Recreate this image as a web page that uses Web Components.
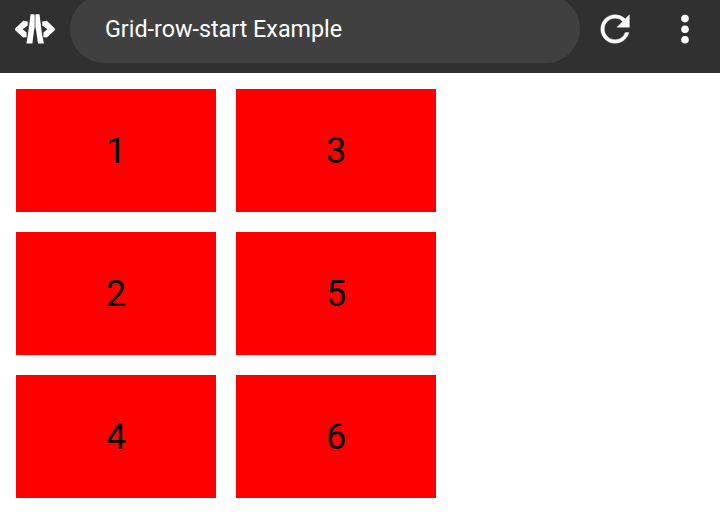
<!DOCTYPE html>
<html lang="en">
<head>
<meta charset="utf-8">
<title>Grid-row-start Example</title>
<style>
body { margin: 0; background: #fff; font-family: Roboto, sans-serif; }
</style>
</head>
<body>
<browser-bar>Grid-row-start Example</browser-bar>
<number-grid>
  <grid-cell>1</grid-cell>
  <grid-cell>2</grid-cell>
  <grid-cell>4</grid-cell>
  <grid-cell>3</grid-cell>
  <grid-cell>5</grid-cell>
  <grid-cell>6</grid-cell>
</number-grid>
<script>
function define(name, html) {
  customElements.define(name, class extends HTMLElement {
    constructor() {
      super();
      this.attachShadow({ mode: "open" }).innerHTML = html;
    }
  });
}

define("browser-bar", `
<style>
:host { display: grid; grid-template-columns: 70px 510px 70px 70px; height: 73px; background: #303030; overflow: hidden; color: #fff; }
svg { display: block; width: 70px; height: 58px; fill: #fff; }
.address { height: 68px; margin-top: -5px; border-radius: 34px; background: #404040; box-sizing: border-box; padding-left: 35px; font-size: 23.3px; line-height: 68px; white-space: nowrap; }
</style>
<svg viewBox="0 0 70 58">
  <path d="M23.2 20.8L27.8 21.6V25.4L22.6 29.3L26.6 32.6V37.2L23.2 37.6L15.4 30.4Q14.6 29.3 15.4 28.2ZM46.8 20.8L42.2 21.6V25.4L47.4 29.3L43.4 32.6V37.2L46.8 37.6L54.6 30.4Q55.4 29.3 54.6 28.2Z"/>
  <path fill="#858585" d="M34 15H36V26L35.3 30H34.5L33.8 26Z"/>
  <path d="M30.6 14.3H34.4V27L32.4 43.6H26.4L28 34ZM35.6 14.3H39.5L42 34L43.9 43.6H38L35.6 27Z"/>
</svg>
<div class="address"><slot></slot></div>
<svg viewBox="0 0 70 58"><path stroke="#fff" stroke-width=".2" transform="translate(13.6 7.5) scale(1.79)" d="M17.65 6.35A7.95 7.95 0 0 0 12 4c-4.42 0-7.99 3.58-7.99 8s3.57 8 7.99 8c3.73 0 6.84-2.55 7.73-6h-2.08A5.99 5.99 0 0 1 12 18c-3.31 0-6-2.69-6-6s2.69-6 6-6c1.66 0 3.14.69 4.22 1.78L13 11h7V4z"/></svg>
<svg viewBox="0 0 70 58"><circle cx="35" cy="18.6" r="3.8"/><circle cx="35" cy="29.2" r="3.8"/><circle cx="35" cy="39.7" r="3.8"/></svg>
`);

define("number-grid", `
<style>
:host { display: grid; grid-template: repeat(3, 123px) / repeat(2, 200px); grid-auto-flow: column; gap: 20px; padding: 16px; }
</style>
<slot></slot>
`);

define("grid-cell", `
<style>
:host { display: flex; align-items: center; justify-content: center; background: #f00; color: #000; font-size: 36px; line-height: 42px; }
</style>
<slot></slot>
`);
</script>
</body>
</html>
